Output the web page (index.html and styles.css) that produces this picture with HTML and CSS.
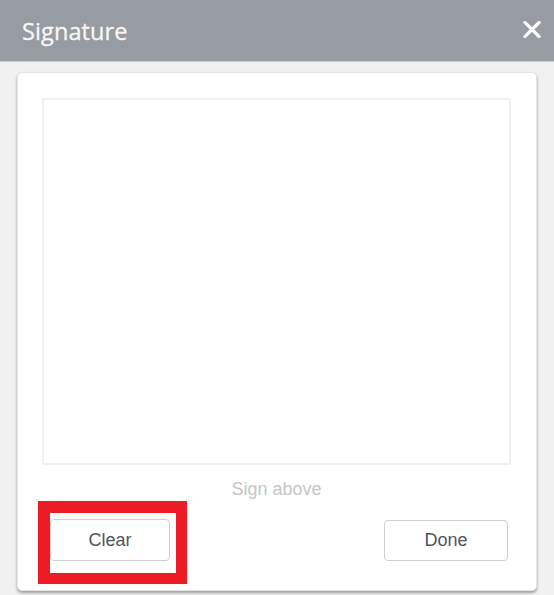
FILE: index.html
```html
<!DOCTYPE html>
<html>
<head>
<meta charset="utf-8">
<link rel="stylesheet" href="styles.css">
</head>
<body>
<div class="dialog">
  <div class="header">
    <span class="title">Signature</span>
    <button class="close" aria-label="Close">
      <svg width="18" height="17" viewBox="0 0 18 17"><path d="M2 1.5 L16 15.5 M16 1.5 L2 15.5" stroke="#fff" stroke-width="3.2" stroke-linecap="square"/></svg>
    </button>
  </div>
  <div class="content">
    <div class="card">
      <div class="pad"></div>
      <div class="hint">Sign above</div>
      <div class="actions">
        <button class="btn btn-clear">Clear</button>
        <button class="btn btn-done">Done</button>
      </div>
      <div class="highlight"></div>
    </div>
  </div>
</div>
</body>
</html>
```
FILE: styles.css
```css
html, body {
  margin: 0;
  padding: 0;
  background: #f1f1f1;
}
.dialog {
  width: 554px;
  height: 595px;
  overflow: hidden;
  font-family: "Liberation Sans", Arial, sans-serif;
}
.header {
  height: 61px;
  background: #979ba2;
  border-bottom: 1px solid #c9cbcf;
  display: flex;
  align-items: center;
  justify-content: space-between;
  padding: 0 13px 0 22px;
}
.title {
  font-family: "Open Sans", sans-serif;
  font-size: 23.5px;
  letter-spacing: 0.1px;
  color: #f7f7f7;
  margin-top: 0;
  -webkit-text-stroke: 0.3px #f7f7f7;
}
.close {
  background: none;
  border: 0;
  padding: 0;
  width: 18px;
  height: 17px;
  margin-top: -3px;
  display: flex;
}
.content {
  padding: 10px 17px 0 17px;
}
.card {
  position: relative;
  background: #fff;
  border: 1px solid #e4e4e4;
  border-radius: 5px;
  box-shadow: 0 2px 3px rgba(0,0,0,0.35);
  padding: 25px 0 0 24px;
  box-sizing: content-box;
  width: 494px;
  height: 492px;
}
.pad {
  width: 465px;
  height: 363px;
  border: 2px solid #f0f0f0;
  border-radius: 2px;
}
.hint {
  width: 469px;
  text-align: center;
  color: #c6c6c6;
  font-size: 18px;
  line-height: 21px;
  margin-top: 14px;
}
.actions {
  display: flex;
  justify-content: space-between;
  margin: 19px 0 0 8px;
  width: 458px;
}
.btn {
  height: 42px;
  background: #fff;
  border: 1px solid #cfcfcf;
  border-radius: 4px;
  font-family: "Liberation Sans", Arial, sans-serif;
  font-size: 18px;
  color: #505560;
  padding: 0;
}
.btn-clear {
  width: 120px;
}
.btn-done {
  width: 124px;
  height: 41px;
  margin-top: 1px;
}
.highlight {
  position: absolute;
  left: 20px;
  top: 428px;
  width: 126px;
  height: 60px;
  border: 12px solid #ed1c24;
  border-right-width: 11px;
  border-bottom-width: 11px;
}
```
